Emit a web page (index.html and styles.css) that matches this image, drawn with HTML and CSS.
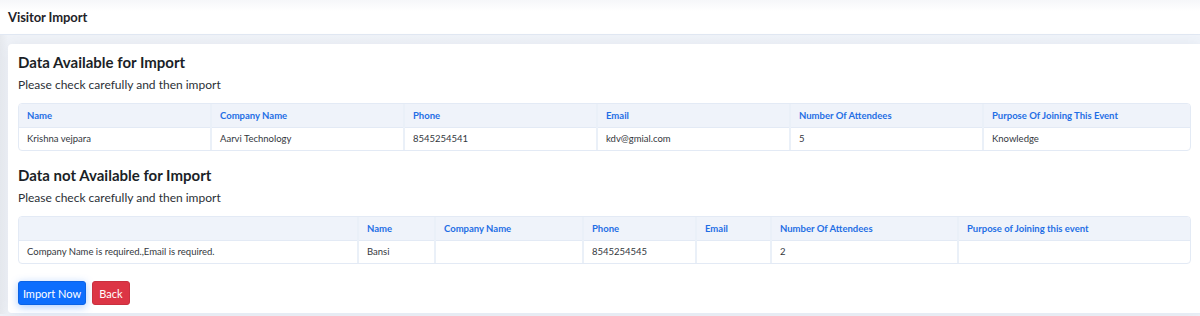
FILE: index.html
```html
<!DOCTYPE html>
<html>
<head>
<meta charset="utf-8">
<link rel="stylesheet" href="styles.css">
</head>
<body>
<header class="topbar"><h1 class="page-title">Visitor Import</h1></header>
<main class="page">
  <section class="card">
    <h2 class="sec-title">Data Available for Import</h2>
    <p class="sec-sub">Please check carefully and then import</p>
    <div class="tbl-wrap">
      <table class="tbl t1">
        <colgroup><col class="c1"><col class="c2"><col class="c2"><col class="c2"><col class="c2"><col></colgroup>
        <thead><tr><th>Name</th><th>Company Name</th><th>Phone</th><th>Email</th><th>Number Of Attendees</th><th>Purpose Of Joining This Event</th></tr></thead>
        <tbody><tr><td>Krishna vejpara</td><td>Aarvi Technology</td><td>8545254541</td><td>kdv@gmial.com</td><td>5</td><td>Knowledge</td></tr></tbody>
      </table>
    </div>
    <h2 class="sec-title second">Data not Available for Import</h2>
    <p class="sec-sub">Please check carefully and then import</p>
    <div class="tbl-wrap">
      <table class="tbl t2">
        <colgroup><col class="c-err"><col class="c-name"><col class="c-comp"><col class="c-phone"><col class="c-email"><col class="c-num"><col></colgroup>
        <thead><tr><th></th><th>Name</th><th>Company Name</th><th>Phone</th><th>Email</th><th>Number Of Attendees</th><th>Purpose of Joining this event</th></tr></thead>
        <tbody><tr><td>Company Name is required.,Email is required.</td><td>Bansi</td><td></td><td>8545254545</td><td></td><td>2</td><td></td></tr></tbody>
      </table>
    </div>
    <div class="actions">
      <button class="btn btn-primary">Import Now</button>
      <button class="btn btn-danger">Back</button>
    </div>
  </section>
</main>
</body>
</html>
```
FILE: styles.css
```css
* { box-sizing: border-box; }
html, body { margin: 0; padding: 0; }
body {
  width: 1200px;
  height: 316px;
  overflow: hidden;
  background: #eef2f8;
  font-family: "Lato", "Noto Sans", sans-serif;
  color: #212529;
}
.topbar {
  height: 35px;
  background: linear-gradient(#f6f7f9 0px, #ffffff 11px);
  border-bottom: 1px solid #e1e8f3;
  display: flex;
  align-items: center;
  padding: 0 8px;
}
.page-title {
  margin: 0;
  font-size: 13px;
  font-weight: 700;
  color: #1f2329;
  letter-spacing: -0.1px;
}
.page {
  padding: 9px 0 0 8px;
  background: linear-gradient(90deg, #e6e9ee 0px, #f0f3f8 8px, #f0f4fa 100%);
}
.card {
  background: #ffffff;
  border-radius: 4px 0 0 4px;
  padding: 9px 9px 8px 10px;
  height: 270px;
  box-shadow: 0 0 14px rgba(60, 80, 110, 0.08);
  border-bottom: 1px solid #e6ecf5;
}
.sec-title {
  margin: 0;
  font-size: 15px;
  font-weight: 700;
  color: #1b1f27;
  line-height: 18px;
}
.sec-title.second { margin-top: 15px; }
.sec-sub {
  margin: 6px 0 11px;
  font-size: 12px;
  color: #2b2f36;
  line-height: 15px;
}
.tbl-wrap {
  border: 1px solid #e3eaf5;
  border-radius: 4px;
  overflow: hidden;
}
.tbl {
  width: 100%;
  border-collapse: collapse;
  table-layout: fixed;
  font-size: 9.5px;
}
.tbl th, .tbl td {
  text-align: left;
  padding: 0 8px;
  border-left: 2px solid #eaf0f8;
  white-space: nowrap;
  overflow: hidden;
}
.tbl th:first-child, .tbl td:first-child { border-left: none; }
.tbl th {
  height: 23px;
  background: #eff3fa;
  color: #1f6fe5;
  font-weight: 700;
  border-bottom: 1px solid #e3eaf5;
}
.tbl td {
  height: 23px;
  color: #33373d;
  font-weight: 400;
}
.c1 { width: 192px; }
.c2 { width: 193px; }
.c-err { width: 339px; }
.c-name { width: 77px; }
.c-comp { width: 148px; }
.c-phone { width: 113px; }
.c-email { width: 75px; }
.c-num { width: 187px; }
.actions {
  display: flex;
  gap: 6px;
  margin-top: 17px;
}
.btn {
  font-family: inherit;
  font-size: 11px;
  height: 24px;
  border-radius: 3px;
  padding: 0;
  color: #fff;
  border: 1px solid transparent;
  white-space: nowrap;
  cursor: pointer;
}
.btn-primary {
  background: #0d6efd;
  border-color: #0b63e5;
  width: 68px;
  box-shadow: 0 2px 8px rgba(13, 110, 253, 0.35);
}
.btn-danger {
  background: #dc3545;
  border-color: #c9303f;
  width: 38px;
}
```
